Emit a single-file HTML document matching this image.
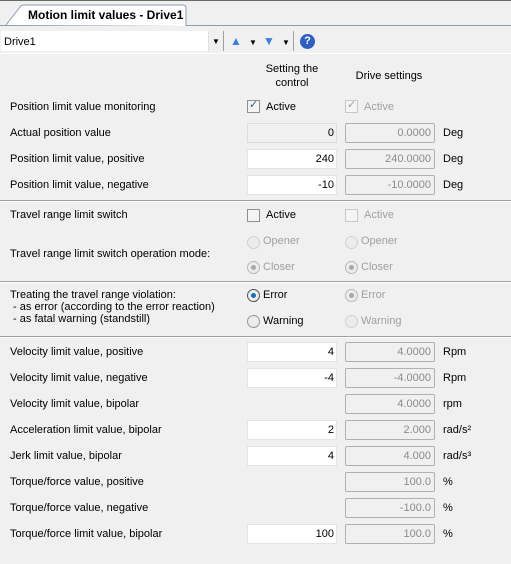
<!DOCTYPE html>
<html><head><style>
body{margin:0;width:511px;height:564px;background:#f0f0f0;font-family:"Liberation Sans",sans-serif;font-size:11px;color:#000;position:relative;overflow:hidden}
.a{position:absolute}
.lbl{position:absolute;left:10px;line-height:14px}
.in{position:absolute;left:247px;width:86px;height:18px;background:#fff;border:1px solid #e3e3e3;text-align:right;line-height:18px;padding-right:2px}
.in.d{background:#f0f0f0;border-color:#dcdcdc}
.ro{position:absolute;left:345px;width:85px;height:18px;border:1px solid #b0b0b0;border-radius:2px;text-align:right;line-height:18px;padding-right:3px;color:#8a8a8a}
.u{position:absolute;left:443px;line-height:14px}
.sep{position:absolute;left:0;width:511px;height:1px;background:#a0a0a0;border-bottom:1px solid #fff}
.cb{position:absolute;width:11px;height:11px;border:1px solid #8f8f8f;background:#f4f4f4}
.cb.g{border-color:#c8c8c8}
.rd{position:absolute;width:11px;height:11px;border-radius:50%;border:1px solid #b8b8b8;background:#ececec}
.rd.s::after{content:"";position:absolute;left:3px;top:3px;width:5px;height:5px;border-radius:50%;background:#a8a8a8}
.rd.b{border-color:#555}
.rd.b::after{background:#1a6fb6}
.t{position:absolute;line-height:14px}
.g2{color:#a0a0a0}
</style></head><body>
<div class="a" style="left:0;top:0;width:511px;height:1px;background:#6a6a6a"></div>
<div class="a" style="left:0;top:25px;width:511px;height:1px;background:#8b9bb3"></div>
<svg class="a" style="left:0;top:3px" width="200" height="24"><path d="M6 22 L20 4 Q21 2 24 2 L183 2 Q186 2 186 5 L186 23" fill="#fff" stroke="#8b9bb3"/></svg>
<div class="t" style="left:28px;top:8px;font-weight:bold;font-size:12px">Motion limit values - Drive1</div>
<div class="a" style="left:1px;top:31px;width:207px;height:20px;background:#fff"></div>
<div class="t" style="left:4px;top:35px">Drive1</div>
<div class="a" style="left:208px;top:31px;width:1px;height:20px;background:#e0e0e0"></div>
<div class="t" style="left:212px;top:35px;font-size:8px">▼</div>
<div class="a" style="left:223px;top:31px;width:1px;height:20px;background:#a0a0a0"></div>
<div class="t" style="left:230px;top:34px;color:#3d7fd8;font-size:12px">▲</div>
<div class="t" style="left:249px;top:36px;font-size:8px">▼</div>
<div class="t" style="left:263px;top:34px;color:#3d7fd8;font-size:12px">▼</div>
<div class="t" style="left:282px;top:36px;font-size:8px">▼</div>
<div class="a" style="left:293px;top:31px;width:1px;height:20px;background:#a0a0a0"></div>
<div class="a" style="left:300px;top:34px;width:15px;height:15px;border-radius:50%;background:#2f5fc0;color:#fff;font-weight:bold;font-size:11px;text-align:center;line-height:15px">?</div>
<div class="a" style="left:0;top:53px;width:511px;height:1px;background:#fff"></div>
<div class="t" style="left:250px;top:62px;width:84px;text-align:center">Setting the control</div>
<div class="t" style="left:345px;top:69px;width:88px;text-align:center">Drive settings</div>

<div class="lbl" style="top:100px">Position limit value monitoring</div>
<div class="cb" style="left:247px;top:100px"></div><div class="t" style="left:249px;top:98px;color:#2a5aa0">✓</div><div class="t" style="left:266px;top:100px">Active</div>
<div class="cb g" style="left:345px;top:100px"></div><div class="t g2" style="left:347px;top:98px">✓</div><div class="t g2" style="left:364px;top:100px">Active</div>

<div class="lbl" style="top:126px">Actual position value</div>
<div class="in d" style="top:123px">0</div><div class="ro" style="top:123px">0.0000</div><div class="u" style="top:126px">Deg</div>
<div class="lbl" style="top:152px">Position limit value, positive</div>
<div class="in" style="top:149px">240</div><div class="ro" style="top:149px">240.0000</div><div class="u" style="top:152px">Deg</div>
<div class="lbl" style="top:178px">Position limit value, negative</div>
<div class="in" style="top:175px">-10</div><div class="ro" style="top:175px">-10.0000</div><div class="u" style="top:178px">Deg</div>
<div class="sep" style="top:200px"></div>

<div class="lbl" style="top:208px">Travel range limit switch</div>
<div class="cb" style="left:247px;top:209px"></div><div class="t" style="left:266px;top:208px">Active</div>
<div class="cb g" style="left:345px;top:209px"></div><div class="t g2" style="left:364px;top:208px">Active</div>
<div class="lbl" style="top:247px">Travel range limit switch operation mode:</div>
<div class="rd" style="left:247px;top:236px;border-color:#d0d0d0"></div><div class="t g2" style="left:263px;top:234px">Opener</div>
<div class="rd" style="left:345px;top:236px;border-color:#d0d0d0"></div><div class="t g2" style="left:361px;top:234px">Opener</div>
<div class="rd s" style="left:247px;top:261px"></div><div class="t g2" style="left:263px;top:260px">Closer</div>
<div class="rd s" style="left:345px;top:261px"></div><div class="t g2" style="left:361px;top:260px">Closer</div>
<div class="sep" style="top:281px"></div>

<div class="lbl" style="top:289px;line-height:12px">Treating the travel range violation:<br>&nbsp;- as error (according to the error reaction)<br>&nbsp;- as fatal warning (standstill)</div>
<div class="rd s b" style="left:247px;top:289px"></div><div class="t" style="left:263px;top:288px">Error</div>
<div class="rd s" style="left:345px;top:289px"></div><div class="t g2" style="left:361px;top:288px">Error</div>
<div class="rd" style="left:247px;top:315px;border-color:#999"></div><div class="t" style="left:263px;top:314px">Warning</div>
<div class="rd" style="left:345px;top:315px;border-color:#d0d0d0"></div><div class="t g2" style="left:361px;top:314px">Warning</div>
<div class="sep" style="top:336px"></div>

<div class="lbl" style="top:345px">Velocity limit value, positive</div>
<div class="in" style="top:342px">4</div><div class="ro" style="top:342px">4.0000</div><div class="u" style="top:345px">Rpm</div>
<div class="lbl" style="top:371px">Velocity limit value, negative</div>
<div class="in" style="top:368px">-4</div><div class="ro" style="top:368px">-4.0000</div><div class="u" style="top:371px">Rpm</div>
<div class="lbl" style="top:397px">Velocity limit value, bipolar</div>
<div class="ro" style="top:394px">4.0000</div><div class="u" style="top:397px">rpm</div>
<div class="lbl" style="top:423px">Acceleration limit value, bipolar</div>
<div class="in" style="top:420px">2</div><div class="ro" style="top:420px">2.000</div><div class="u" style="top:423px">rad/s²</div>
<div class="lbl" style="top:449px">Jerk limit value, bipolar</div>
<div class="in" style="top:446px">4</div><div class="ro" style="top:446px">4.000</div><div class="u" style="top:449px">rad/s³</div>
<div class="lbl" style="top:475px">Torque/force value, positive</div>
<div class="ro" style="top:472px">100.0</div><div class="u" style="top:475px">%</div>
<div class="lbl" style="top:501px">Torque/force value, negative</div>
<div class="ro" style="top:498px">-100.0</div><div class="u" style="top:501px">%</div>
<div class="lbl" style="top:527px">Torque/force limit value, bipolar</div>
<div class="in" style="top:524px">100</div><div class="ro" style="top:524px">100.0</div><div class="u" style="top:527px">%</div>
</body></html>
